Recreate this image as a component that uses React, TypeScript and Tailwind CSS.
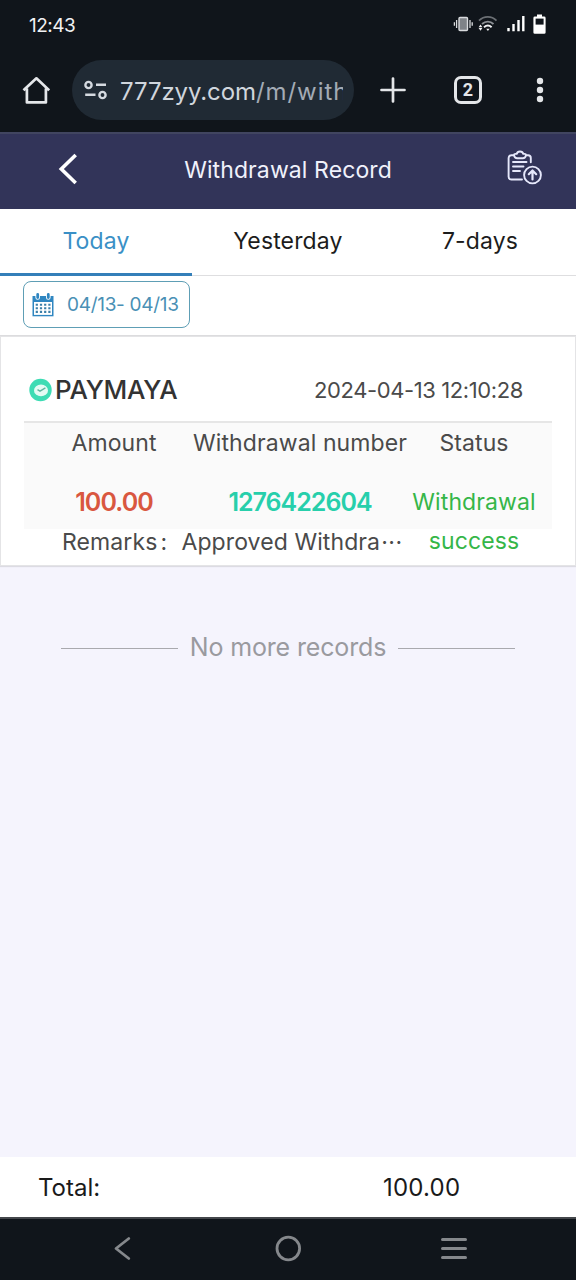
import type { ReactNode } from 'react';

type Tab = {
  label: string;
  active?: boolean;
};

const TABS: ReadonlyArray<Tab> = [
  { label: 'Today', active: true },
  { label: 'Yesterday' },
  { label: '7-days' },
];

const RECORD = {
  method: 'PAYMAYA',
  time: '2024-04-13 12:10:28',
  amount: '100.00',
  number: '1276422604',
  status: 'Withdrawal success',
  remarks: 'Approved Withdra',
};

function StatusIcons() {
  return (
    <svg width="96" height="24" viewBox="452 12 96 24" fill="none">
      {/* vibrate */}
      <rect x="459" y="17.5" width="8.5" height="13" rx="1" fill="#7f8388" stroke="#d9dbde" strokeWidth="1.4" />
      <path d="M456.6 20v8M454.4 22.3v3.4M470 20v8M472.2 22.3v3.4" stroke="#d9dbde" strokeWidth="1.3" />
      {/* wifi */}
      <path d="M479 20.6c5-5 12.5-5 17.5 0" stroke="#6b6f74" strokeWidth="1.8" />
      <path d="M482 24c3.5-3.3 8.2-3.3 11.5 0" stroke="#8e9297" strokeWidth="1.8" />
      <path d="M484 27.2c2.4-2 5.4-2 7.6 0" stroke="#f1f2f4" strokeWidth="2" />
      <path d="M486.2 28.8h3.4l-1.7 2.2zM478.6 27.2l1.9-2.7 1.9 2.7zM478.6 28l1.9 2.7 1.9-2.7z" fill="#f1f2f4" />
      {/* signal */}
      <path d="M508.5 28v3.2M513.5 24v7.2M518.5 20v11.2M523.3 16v15.2" stroke="#fff" strokeWidth="2.4" />
      {/* battery */}
      <path d="M537 14.5h5v2h2.2q1.4 0 1.4 1.4V32.4q0 1.4-1.4 1.4h-9.4q-1.4 0-1.4-1.4V17.9q0-1.4 1.4-1.4h2.2z" fill="#fff" />
      <path d="M535.6 18.6h8v6h-8z" fill="#10151b" />
    </svg>
  );
}

function BrowserBar() {
  return (
    <div className="flex h-[84px] items-start pt-[12px] text-[#dfe2e6]">
      <svg className="mt-[15px] ml-[22px]" width="28" height="30" viewBox="0 0 28 30" fill="none" stroke="#e4e6e9" strokeWidth="2.7">
        <path d="M1.5 15.3 14.4 3.3 27.2 15.3M4.9 13.5V27.4H23.9V13.5" strokeLinejoin="round" />
      </svg>
      <div className="ml-[22px] flex h-[60px] w-[282px] items-center rounded-full bg-[#202a34] pl-[12px]">
        <svg width="24" height="20" viewBox="0 0 24 20" fill="none" stroke="#d5dae0" strokeWidth="2.4">
          <circle cx="4.5" cy="5" r="3.1" />
          <circle cx="18.5" cy="15" r="3.1" />
          <path d="M12 4.8h10M1.2 14.8h10.3" />
        </svg>
        <div className="ml-[12px] w-[223px] overflow-hidden pt-[3px] text-[24px] leading-[36px] tracking-[-0.1px] whitespace-nowrap text-[#d0d6dd]">
          777zyy.com<span className="tracking-[0.95px] text-[#a3abb5]">/m/with</span>
        </div>
      </div>
      <svg className="mt-[17px] ml-[26px]" width="26" height="26" viewBox="0 0 26 26" fill="none">
        <path d="M1.5 13h23M13 1.5v23" stroke="#e4e6e9" strokeWidth="2.7" strokeLinecap="round" />
      </svg>
      <div className="mt-[16px] ml-[48px] flex h-[28px] w-[28px] items-center justify-center rounded-[7px] border-3 border-[#e4e6e9] font-['Roboto',sans-serif] text-[18px] leading-none font-bold text-[#e4e6e9]">
        2
      </div>
      <svg className="mt-[17px] ml-[54px]" width="8" height="26" viewBox="0 0 8 26" fill="#e4e6e9">
        <circle cx="4" cy="4" r="3.2" />
        <circle cx="4" cy="13" r="3.2" />
        <circle cx="4" cy="22" r="3.2" />
      </svg>
    </div>
  );
}

function ClipboardIcon() {
  return (
    <svg width="36" height="36" viewBox="507 150 36 36" fill="none" stroke="#e6e8fb" strokeWidth="1.9" strokeLinecap="round" strokeLinejoin="round">
      <path d="M513.5 155.3h-2.1q-2.8 0-2.8 2.8v18.6q0 2.8 2.8 2.8h10.6M526.5 155.3h1.5q2.8 0 2.8 2.8v4.2" />
      <path d="M514 155.1q0-1.2 1.5-1.2h1.2q.6-2.4 3.3-2.4t3.3 2.4h1.2q1.5 0 1.5 1.2-.6 3.1-3.2 3.1h-5.6q-2.6 0-3.2-3.1z" />
      <path d="M513 162h13.5M513 166.500h10.500M513 171h7" />
      <circle cx="532.5" cy="175" r="8.4" />
      <path d="M532.5 179.5v-8.5M528.8 174.2l3.7-3.7 3.7 3.7" strokeWidth="2.2" />
    </svg>
  );
}

function CalendarIcon() {
  return (
    <svg width="22" height="24" viewBox="0 0 22 24" fill="none">
      <path d="M.5 3h21v20.3H.5z" fill="#2f86c1" />
      <path d="M2 9h18v12.9H2z" fill="#fff" />
      <path d="M5.7 1.5v3M16.3 1.5v3" stroke="#fff" strokeWidth="4.6" strokeLinecap="round" />
      <path d="M5.7 1.5v3M16.3 1.5v3" stroke="#2f86c1" strokeWidth="2.8" strokeLinecap="round" />
      <path d="M3.7 11.7h15M3.7 15.3h15M3.7 18.9h15" stroke="#3c7fa8" strokeWidth="2.1" strokeDasharray="2.2 2" />
    </svg>
  );
}

function PaymayaIcon() {
  return (
    <svg width="24" height="24" viewBox="0 0 24 24" fill="none">
      <circle cx="12.5" cy="12" r="11.2" fill="#3edcb4" />
      <ellipse cx="13" cy="12.4" rx="7" ry="5.9" fill="#e4fbf4" />
      <path d="M9.5 11.6l2.5 1.5 5.4-3.2" stroke="#5fb5a0" strokeWidth="1.4" />
    </svg>
  );
}

function Cell({ label, children }: { label: string; children: ReactNode }) {
  return (
    <div className="flex flex-col items-center text-center">
      <span className="text-[23px] leading-[40px] tracking-[0.1px] whitespace-nowrap text-[#4a4a4a]">{label}</span>
      <div className="mt-[20px]">{children}</div>
    </div>
  );
}

function RecordCard() {
  return (
    <div className="h-[230px] border border-[#e4e4e6] bg-white px-[23px] shadow-[0_1px_1px_rgba(0,0,0,0.1)]">
      <div className="flex h-[86px] items-center justify-between border-b-2 border-[#e6e6e6] pt-[22px] pr-[29px] pl-[4px]">
        <div className="flex items-center gap-[3px]">
          <PaymayaIcon />
          <span className="text-[26px] leading-[34px] font-medium tracking-[-0.25px] text-[#333]">{RECORD.method}</span>
        </div>
        <span className="text-[22px] leading-[34px] tracking-[-0.4px] text-[#4a4a4a]">{RECORD.time}</span>
      </div>
      <div className="grid h-[106px] grid-cols-[180px_192px_156px] bg-[#fafafa]">
        <Cell label="Amount">
          <span className="text-[25px] leading-[38px] font-semibold tracking-[-0.9px] text-[#d9573f]">{RECORD.amount}</span>
        </Cell>
        <Cell label="Withdrawal number">
          <span className="text-[25px] leading-[38px] font-semibold tracking-[-1px] text-[#27cfab]">{RECORD.number}</span>
        </Cell>
        <Cell label="Status">
          <span className="block w-[130px] text-[23px] leading-[39px] tracking-[0.1px] text-[#35b648]">{RECORD.status}</span>
        </Cell>
      </div>
      <div className="mt-[-2px] flex h-[31px] items-center pl-[38px] text-[23px] leading-[31px] tracking-[0.1px] whitespace-nowrap text-[#4a4a4a]">
        <span>Remarks</span>
        <span className="w-[24px] pl-[3px]">:</span>
        <span>{RECORD.remarks}</span>
        <span className="pl-[1px] tracking-[0.6px]">···</span>
      </div>
    </div>
  );
}

export default function App() {
  return (
    <div className="flex h-[1280px] w-[576px] flex-col overflow-hidden bg-[#f5f4fd] font-['Inter','Noto_Sans_CJK_SC',sans-serif]">
      <div className="bg-[#10151b]">
        <div className="flex h-[48px] items-center justify-between pr-[28px] pl-[29px]">
          <span className="pt-[4px] text-[19px] tracking-[-0.5px] text-[#f1f2f4]">12:43</span>
          <StatusIcons />
        </div>
        <BrowserBar />
      </div>

      <header className="flex h-[77px] items-center border-t-2 border-[#414560] bg-[#323459] text-white">
        <svg className="mt-[-5px] ml-[58px]" width="20" height="32" viewBox="0 0 20 32" fill="none">
          <path d="M17.7 2 3.3 16l14.4 14" stroke="#fff" strokeWidth="3.6" />
        </svg>
        <h1 className="ml-[78px] w-[264px] pb-[3px] text-center text-[23px] tracking-[0.1px] text-[#f0f1fb]">
          Withdrawal Record
        </h1>
        <div className="ml-[87px] pb-[8px]">
          <ClipboardIcon />
        </div>
      </header>

      <nav className="grid h-[67px] grid-cols-3 bg-white">
        {TABS.map((t) => (
          <button
            key={t.label}
            className={`text-[23px] tracking-[0.15px] ${
              t.active
                ? 'border-b-3 border-[#347fb9] pt-[1px] text-[#3a90c6]'
                : 'border-b border-[#dedee0] pb-px text-[#1c1c1c]'
            }`}
          >
            {t.label}
          </button>
        ))}
      </nav>

      <div className="h-[60px] shrink-0 border-b border-[#dcdcde] bg-white pt-[5px] pl-[23px]">
        <button className="flex h-[47px] w-[167px] items-center gap-[13px] rounded-[8px] border border-[#5e9eb5] pl-[8px] text-[19px] tracking-[-0.3px] whitespace-nowrap text-[#4a90b5]">
          <CalendarIcon />
          <span className="pt-[2px]">04/13- 04/13</span>
        </button>
      </div>

      <main className="flex-1">
        <RecordCard />
        <div className="mt-[61px] flex items-center justify-center gap-[12px] text-[25px] leading-[40px] tracking-[-0.15px] whitespace-nowrap text-[#9a9a9f]">
          <span className="mt-[3px] h-px w-[117px] bg-[#a9a9ae]" />
          No more records
          <span className="mt-[3px] h-px w-[117px] bg-[#a9a9ae]" />
        </div>
      </main>

      <footer className="flex h-[60px] items-center bg-white pt-[2px] text-[24px] text-[#1a1a1a]">
        <span className="w-[345px] pl-[38px]">Total:</span>
        <span className="pl-[38px] tracking-[0.2px]">100.00</span>
      </footer>
      <div className="flex h-[63px] items-center border-t-2 border-[#44474b] bg-[#10151b]">
        <svg width="576" height="61" viewBox="0 1 576 61" fill="none" stroke="#85888c" strokeWidth="2.8" strokeLinecap="round">
          <path d="M128.8 20.5 116 30.500l12.800 10" strokeLinejoin="round" />
          <circle cx="288.3" cy="30.5" r="11.3" />
          <path d="M442.5 21.5h23M442.5 30.5h23M442.5 39.5h23" strokeWidth="3" />
        </svg>
      </div>
    </div>
  );
}
